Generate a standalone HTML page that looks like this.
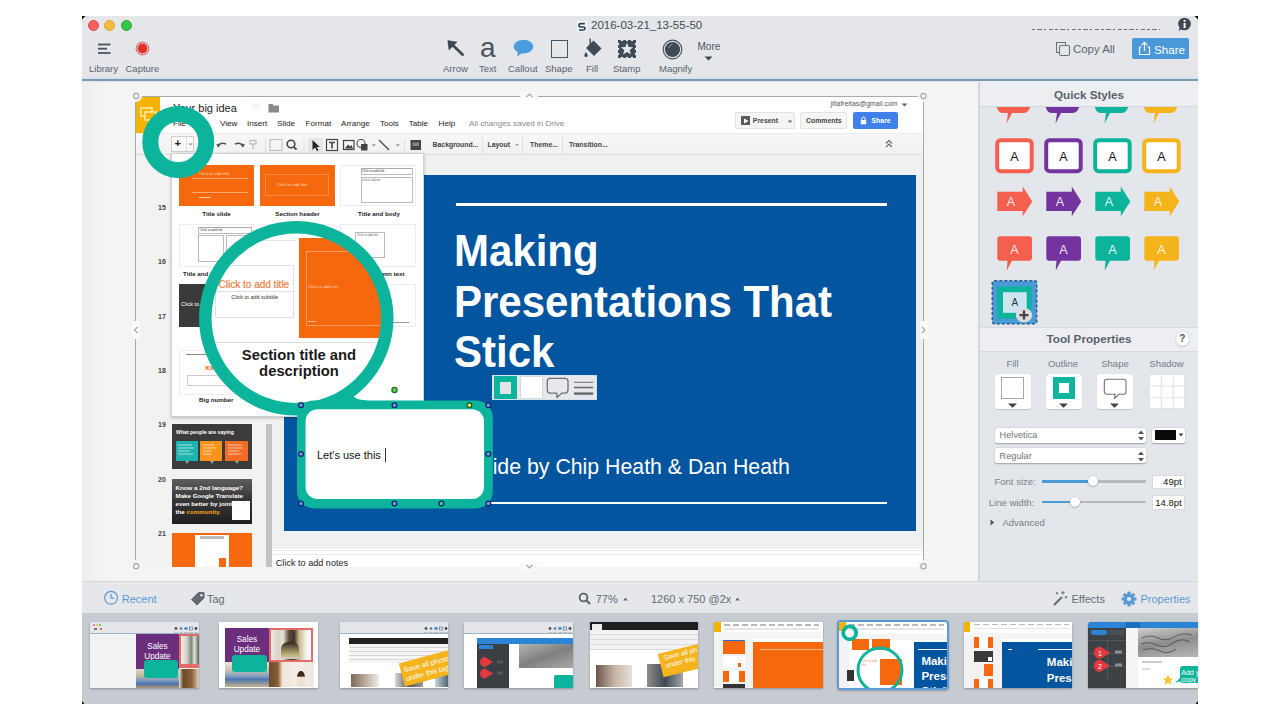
<!DOCTYPE html>
<html><head><meta charset="utf-8">
<style>
*{margin:0;padding:0;box-sizing:border-box}
html,body{width:1280px;height:720px;overflow:hidden;background:#fff;font-family:"Liberation Sans",sans-serif}
.a{position:absolute}
#win{position:absolute;left:82px;top:16px;width:1116px;height:688px;background:#e4e6ea;overflow:hidden}
#tb{left:0;top:0;width:1116px;height:65px;background:#e4e6ea;border-bottom:2px solid #7f98ac;box-shadow:0 -1.5px 0 #d3e3f0 inset, 0 1.5px 0 #dce9f4}
#canvas{left:0;top:66px;width:896px;height:499px;background:linear-gradient(90deg,#eceeed 0px,#f1f3f2 14px,#f3f5f4 30px)}
#rp{left:896px;top:66px;width:220px;height:499px;background:#e3e6ea;border-left:2px solid #d3d6da}
#bb{left:0;top:565px;width:1116px;height:32px;background:#e5e7eb;border-top:1px solid #d3d6da}
.lbl{font-size:9.5px;color:#5b636d;white-space:nowrap;line-height:12px}
.mn{top:120.4px;font-size:8.1px;line-height:8.1px;color:#222;white-space:nowrap}
.gb{font-size:6.9px;line-height:7px;font-weight:700;color:#444;white-space:nowrap}
.num{left:158px;font-size:7px;line-height:8px;color:#444;font-weight:700}
.tiny{font-size:4.3px;line-height:5px;white-space:nowrap}
.lb{font-size:6.2px;line-height:7px;font-weight:700;color:#222;white-space:nowrap}
.tp{top:359.4px;text-align:center;font-size:9.5px;line-height:10px;color:#767d85;white-space:nowrap}
.sw{top:374.2px;width:36.1px;height:35.3px;background:#fff;border-radius:3px;box-shadow:0 0.5px 1px rgba(0,0,0,0.15)}
.th{overflow:hidden;box-shadow:0 1px 2px rgba(0,0,0,0.3)}
.ttl{font-size:42px;line-height:42px;font-weight:700;color:#fff;white-space:nowrap;transform:scaleY(1.07);transform-origin:0 35.5px}
#fs{left:0;top:597px;width:1116px;height:91px;background:#c6cbd2}
</style></head><body>
<div id="win">
  <div id="tb" class="a"></div>
  <div id="canvas" class="a"></div>
  <div id="rp" class="a"></div>
  <div id="bb" class="a"></div>
  <div id="fs" class="a"></div>
</div>
<!-- SCREENSHOT -->
<div class="a" style="left:135px;top:95.5px;width:789px;height:471.5px;border:1px solid #a7aaad;background:#fff"></div>
<div class="a" style="left:136px;top:96.5px;width:787px;height:470px;overflow:hidden">
<div class="a" style="left:-136px;top:-96.5px;width:1280px;height:720px;font-family:'Liberation Sans',sans-serif">
  <!-- header -->
  <div class="a" style="left:136px;top:97px;width:787px;height:36px;background:#fff"></div>
  <div class="a" style="left:136px;top:97px;width:24px;height:36px;background:#f4b400"></div>
  <svg class="a" style="left:139px;top:106px" width="19" height="17"><rect x="2" y="2" width="11" height="8" fill="none" stroke="#fde9a8" stroke-width="1.6"/><rect x="6" y="6" width="11" height="8" fill="#f4b400" stroke="#fde9a8" stroke-width="1.6"/></svg>
  <div class="a" style="left:173px;top:103.4px;font-size:11px;line-height:11px;color:#222;white-space:nowrap">Your big idea</div>
  <div class="a" style="left:251px;top:101px;font-size:11px;line-height:11px;color:#ddd">&#9734;</div>
  <svg class="a" style="left:268px;top:103px" width="12" height="10"><path d="M0.5 1 H4.5 L5.5 2.5 H11 V9.5 H0.5 Z" fill="#8a8a8a"/></svg>
  <div class="a mn" style="left:173px">File</div>
  <div class="a mn" style="left:194px">Edit</div>
  <div class="a mn" style="left:220px">View</div>
  <div class="a mn" style="left:247px">Insert</div>
  <div class="a mn" style="left:277px">Slide</div>
  <div class="a mn" style="left:305.5px">Format</div>
  <div class="a mn" style="left:341px">Arrange</div>
  <div class="a mn" style="left:380px">Tools</div>
  <div class="a mn" style="left:408.7px">Table</div>
  <div class="a mn" style="left:438.6px">Help</div>
  <div class="a mn" style="left:469px;color:#8a8a8a">All changes saved in Drive</div>
  <div class="a" style="left:830.5px;top:101.4px;font-size:6.9px;line-height:6.9px;color:#555;white-space:nowrap">jillafreitas@gmail.com</div>
  <svg class="a" style="left:901px;top:103px" width="7" height="4"><path d="M0.5 0.5 H6.5 L3.5 3.5 Z" fill="#666"/></svg>
  <div class="a" style="left:735px;top:112px;width:60px;height:17px;background:#f5f5f5;border:1px solid #e2e2e2;border-radius:2px"></div>
  <div class="a" style="left:740.5px;top:116px;width:9px;height:9px;background:#5b5b5b"></div>
  <svg class="a" style="left:742.5px;top:117.5px" width="6" height="6"><path d="M1 0.5 L5.5 3 L1 5.5 Z" fill="#fff"/></svg>
  <div class="a gb" style="left:752.8px;top:117px">Present</div>
  <svg class="a" style="left:786.5px;top:120px" width="6" height="4"><path d="M0.5 0.5 H5.5 L3 3 Z" fill="#777"/></svg>
  <div class="a" style="left:800px;top:112px;width:47px;height:17px;background:#f5f5f5;border:1px solid #e2e2e2;border-radius:2px"></div>
  <div class="a gb" style="left:806px;top:117px">Comments</div>
  <div class="a" style="left:853px;top:112px;width:45px;height:17px;background:#3f80ea;border-radius:2px"></div>
  <svg class="a" style="left:860px;top:116px" width="7" height="9"><path d="M1.8 4 V2.8 A1.7 1.7 0 0 1 5.2 2.8 V4" fill="none" stroke="#fff" stroke-width="1"/><rect x="0.8" y="4" width="5.4" height="4.3" fill="#fff"/></svg>
  <div class="a gb" style="left:871.5px;top:117px;color:#fff">Share</div>
  <!-- toolbar row -->
  <div class="a" style="left:136px;top:133px;width:787px;height:22px;background:linear-gradient(180deg,#f7f7f7,#f1f1f1);border-top:1px solid #ececec;border-bottom:1px solid #e0e0e0"></div>
  <div class="a" style="left:171.3px;top:136.3px;width:23.2px;height:15.6px;background:#fbfbfb;border:1px solid #cfcfcf"></div>
  <div class="a" style="left:186px;top:137px;width:1px;height:14px;background:#ddd"></div>
  <div class="a" style="left:174.5px;top:136px;font-size:11px;line-height:14px;font-weight:700;color:#222">+</div>
  <svg class="a" style="left:188px;top:143px" width="5" height="3"><path d="M0.5 0.5 H4.5 L2.5 2.5 Z" fill="#888"/></svg>
  <svg class="a" style="left:214px;top:138px" width="212" height="14">
    <g fill="none" stroke="#555" stroke-width="1.5">
      <path d="M4 9 Q6 3.5 12 6"/><path d="M21 6 Q27 3.5 29 9"/>
    </g>
    <path d="M2.2 6.5 L5.8 5.2 L4.6 9.6 Z" fill="#555"/><path d="M31 6.5 L27.4 5.2 L28.6 9.6 Z" fill="#555"/>
    <g stroke="#bbb" stroke-width="1.2" fill="none"><rect x="36" y="2.5" width="6" height="3.5"/><line x1="39" y1="6" x2="39" y2="11.5"/></g>
    <line x1="51.5" y1="1" x2="51.5" y2="14" stroke="#e0e0e0"/>
    <rect x="56" y="1.5" width="12" height="11" fill="none" stroke="#bbb"/>
    <circle cx="77" cy="6" r="3.8" fill="none" stroke="#444" stroke-width="1.6"/><line x1="79.8" y1="8.8" x2="82.5" y2="11.5" stroke="#444" stroke-width="1.8"/>
    <line x1="90" y1="1" x2="90" y2="14" stroke="#e0e0e0"/>
    <rect x="94" y="0" width="15" height="14" fill="#e6e6e6"/>
    <path d="M98.5 2 L98.5 12 L101 9.6 L103 13 L104.5 12.3 L102.6 9 L105.8 9 Z" fill="#222"/>
    <rect x="112.5" y="1.5" width="11" height="11" fill="none" stroke="#444" stroke-width="1.2"/><path d="M115 4.5 H121 M118 4.5 V10.5" stroke="#444" stroke-width="1.6"/>
    <rect x="129.5" y="2.5" width="10.5" height="9" fill="none" stroke="#444" stroke-width="1.2"/><path d="M131 10.5 L134 6.5 L136 8.5 L137.5 7 L139 10.5 Z" fill="#444"/>
    <circle cx="147" cy="5.5" r="4" fill="none" stroke="#444" stroke-width="1.1"/><rect x="147" y="6" width="6.5" height="6.5" fill="#444"/>
    <path d="M157.8 6.3 H161.8 L159.8 8.8 Z" fill="#999"/>
    <line x1="165" y1="2" x2="175" y2="12" stroke="#444" stroke-width="1.3"/>
    <path d="M181.8 6.3 H185.8 L183.8 8.8 Z" fill="#999"/>
    <line x1="190.5" y1="1" x2="190.5" y2="14" stroke="#e0e0e0"/>
    <rect x="196.5" y="2" width="10.5" height="10" fill="#444"/><rect x="198.5" y="4.5" width="6.5" height="3.5" fill="#888"/>
  </svg>
  <div class="a gb" style="left:432.5px;top:141px">Background...</div>
  <div class="a" style="left:481.5px;top:135px;width:1px;height:19px;background:#e0e0e0"></div>
  <div class="a gb" style="left:487.5px;top:141px">Layout</div>
  <svg class="a" style="left:515px;top:144px" width="4" height="3"><path d="M0 0 H4 L2 2 Z" fill="#999"/></svg>
  <div class="a" style="left:522px;top:135px;width:1px;height:19px;background:#e0e0e0"></div>
  <div class="a gb" style="left:530px;top:141px">Theme...</div>
  <div class="a" style="left:562px;top:135px;width:1px;height:19px;background:#e0e0e0"></div>
  <div class="a gb" style="left:569px;top:141px">Transition...</div>
  <svg class="a" style="left:885px;top:139px" width="8" height="9"><path d="M1 4.5 L4 1.5 L7 4.5 M1 8 L4 5 L7 8" fill="none" stroke="#666" stroke-width="1.1"/></svg>
  <!-- left column & workspace -->
  <div class="a" style="left:136px;top:155px;width:136px;height:412px;background:#f2f2f2"></div>
  <div class="a" style="left:272px;top:155px;width:651px;height:394px;background:#eff0f0"></div>
  <div class="a" style="left:266px;top:424px;width:5.5px;height:143px;background:#c3c3c3"></div>
  <div class="a" style="left:284px;top:175px;width:631.5px;height:355.5px;background:#02559e"></div>
  <div class="a" style="left:272px;top:549.5px;width:651px;height:18px;background:#fff;border-top:1px solid #e8e8e8"></div>
  <div class="a" style="left:272px;top:554px;width:651px;height:1px;background:#ececec"></div>
  <div class="a" style="left:275.8px;top:559.4px;font-size:9.1px;line-height:9px;color:#222;white-space:nowrap">Click to add notes</div>
  <!-- slide numbers -->
  <div class="a num" style="top:203.5px">15</div>
  <div class="a num" style="top:258px">16</div>
  <div class="a num" style="top:313px">17</div>
  <div class="a num" style="top:367px">18</div>
  <div class="a num" style="top:421px">19</div>
  <div class="a num" style="top:476px">20</div>
  <div class="a num" style="top:530px">21</div>
  <!-- thumbs 19-21 -->
  <div class="a" style="left:172px;top:424px;width:80px;height:45px;background:#3b3b3b"></div>
  <div class="a" style="left:176px;top:429px;font-size:5.2px;line-height:6px;font-weight:700;color:#fff;white-space:nowrap">What people are saying</div>
  <div class="a" style="left:175.5px;top:441px;width:22px;height:20px;background:#1db4b0"></div>
  <div class="a" style="left:200px;top:441px;width:22px;height:20px;background:#f7941d"></div>
  <div class="a" style="left:225px;top:441px;width:23px;height:20px;background:#f26c25"></div>
  <svg class="a" style="left:175.5px;top:443px" width="73" height="22"><g stroke="#fff" stroke-opacity="0.75" stroke-width="0.8"><path d="M2 2 H16 M2 5 H18 M2 8 H14 M2 11 H17"/><path d="M27 2 H38 M27 5 H40 M27 8 H36 M27 11 H35"/><path d="M52 2 H66 M52 5 H67 M52 8 H63 M52 11 H65"/></g><path d="M9 18 L11 21 L13 18 Z M34 18 L36 21 L38 18 Z M59 18 L61 21 L63 18 Z" fill="#fff" fill-opacity="0.5"/></svg>
  <div class="a" style="left:172px;top:478.5px;width:80px;height:45px;background:linear-gradient(180deg,#5e5e5e 0%,#3a3a3a 40%,#1e1e1e 100%)"></div>
  <div class="a" style="left:175.5px;top:484px;font-size:6.2px;line-height:8px;font-weight:700;color:#fff;white-space:nowrap">Know a 2nd language?<br>Make Google Translate<br>even better by joining<br>the <span style="color:#f7a21b">community.</span></div>
  <div class="a" style="left:231.5px;top:501px;width:18.5px;height:19px;background:#fff"></div>
  <div class="a" style="left:172px;top:533px;width:80px;height:34px;background:#f6680e"></div>
  <div class="a" style="left:195px;top:535px;width:34px;height:32px;background:#fff"></div>
  <div class="a" style="left:200px;top:536px;width:24px;height:3px;background:#bbb"></div>
  <div class="a" style="left:219px;top:558px;width:7px;height:9px;background:#f6680e"></div>
  <!-- slide content -->
  <div class="a" style="left:455.8px;top:202.5px;width:431px;height:3px;background:#fff"></div>
  <div class="a ttl" style="left:454px;top:231px">Making</div>
  <div class="a ttl" style="left:454px;top:282.2px">Presentations That</div>
  <div class="a ttl" style="left:454px;top:332.2px">Stick</div>
  <div class="a" style="left:450px;top:457px;font-size:21.3px;line-height:21.3px;color:#fff;white-space:nowrap">A guide by Chip Heath &amp; Dan Heath</div>
  <div class="a" style="left:455.8px;top:502px;width:431px;height:2px;background:#fff"></div>
  <!-- layout popup -->
  <div class="a" style="left:171px;top:152.5px;width:253px;height:264px;background:#fff;border:1px solid #d0d0d0;box-shadow:0 1px 3px rgba(0,0,0,0.25)"></div>
  <!-- row1 -->
  <div class="a" style="left:179px;top:164.5px;width:74.6px;height:41.5px;background:#f6680e"></div>
  <div class="a tiny" style="left:199px;top:170.5px;color:#ffd9bf">Click to add title</div>
  <div class="a" style="left:192px;top:178px;width:56px;height:0.5px;background:#f9a670"></div>
  <div class="a" style="left:192px;top:192px;width:56px;height:0.5px;background:#f9a670"></div>
  <div class="a" style="left:199px;top:197px;width:12px;height:1px;background:#ffc7a0"></div>
  <div class="a" style="left:260px;top:164.5px;width:75px;height:41.5px;background:#f6680e"></div>
  <div class="a" style="left:265px;top:174px;width:64px;height:22px;border:0.5px solid #f58a4a"></div>
  <div class="a tiny" style="left:277px;top:182px;color:#ffd9bf">Click to add title</div>
  <div class="a" style="left:340px;top:164.5px;width:76px;height:41.5px;background:#fff;border:1px solid #eee"></div>
  <div class="a" style="left:360.5px;top:167.5px;width:52px;height:7px;border:0.6px solid #bbb;border-top:1.3px solid #aaa"></div>
  <div class="a tiny" style="left:362px;top:168.5px;color:#333;font-size:3.2px">Click to add title</div>
  <div class="a" style="left:360.5px;top:177px;width:52px;height:26px;border:0.6px solid #bbb"></div>
  <div class="a tiny" style="left:362px;top:178px;color:#666;font-size:2.6px">Click to add text</div>
  <div class="a lb" style="left:202.3px;top:209.5px">Title slide</div>
  <div class="a lb" style="left:275.3px;top:209.5px">Section header</div>
  <div class="a lb" style="left:358px;top:209.5px">Title and body</div>
  <!-- row2 -->
  <div class="a" style="left:179px;top:224px;width:74.6px;height:43px;background:#fff;border:1px solid #eee"></div>
  <div class="a" style="left:198px;top:227px;width:54px;height:6.5px;border:0.6px solid #bbb;border-top:1.3px solid #aaa"></div>
  <div class="a tiny" style="left:200px;top:228px;color:#333;font-size:3.2px">Click to add title</div>
  <div class="a" style="left:198px;top:235px;width:26px;height:27px;border:0.6px solid #bbb"></div>
  <div class="a" style="left:226px;top:235px;width:26px;height:27px;border:0.6px solid #bbb"></div>
  <div class="a" style="left:260px;top:224px;width:75px;height:43px;background:#fff;border:1px solid #eee"></div>
  <div class="a" style="left:340px;top:224px;width:76px;height:43px;background:#fff;border:1px solid #eee"></div>
  <div class="a" style="left:355px;top:232px;width:30px;height:26px;border:0.6px solid #bbb"></div>
  <div class="a tiny" style="left:357px;top:233px;color:#666;font-size:3px">Click to add title</div>
  <div class="a lb" style="left:183px;top:269.5px">Title and two columns</div>
  <div class="a lb" style="left:356px;top:269.5px">One column text</div>
  <!-- row3 -->
  <div class="a" style="left:179px;top:284px;width:74.6px;height:43px;background:#3a3a3a"></div>
  <div class="a tiny" style="left:181px;top:302px;color:#fff;font-size:5.5px">Click to add title</div>
  <div class="a" style="left:260px;top:284px;width:75px;height:43px;background:#fff;border:1px solid #eee"></div>
  <div class="a" style="left:340px;top:284px;width:76px;height:43px;background:#fff;border:1px solid #eee"></div>
  <div class="a" style="left:347px;top:322px;width:62px;height:0.8px;background:#999"></div>
  <!-- row4 -->
  <div class="a" style="left:179px;top:350px;width:74.6px;height:44.5px;background:#fff;border:1px solid #eee"></div>
  <div class="a" style="left:186px;top:354px;width:62px;height:0.8px;background:#888"></div>
  <div class="a" style="left:205px;top:364px;font-size:8px;line-height:8px;color:#f6680e;font-weight:700">xx%</div>
  <div class="a" style="left:187px;top:375px;width:60px;height:11px;border:0.6px solid #ccc"></div>
  <div class="a" style="left:260px;top:350px;width:75px;height:44.5px;background:#fff;border:1px solid #eee"></div>
  
  <div class="a lb" style="left:199px;top:396px">Big number</div>
</div>
</div>

<!-- ANNOTATIONS -->
<!-- screenshot selection handles -->
<div class="a" style="left:130px;top:90px;width:12px;height:12px;background:#f3f5f4;border-radius:50%"></div>
<div class="a" style="left:917.5px;top:90px;width:12px;height:12px;background:#f3f5f4;border-radius:50%"></div>
<div class="a" style="left:130px;top:560px;width:12px;height:12px;background:#f3f5f4;border-radius:50%"></div>
<div class="a" style="left:917.5px;top:560px;width:12px;height:12px;background:#f3f5f4;border-radius:50%"></div>
<div class="a" style="left:520px;top:92px;width:18px;height:8px;background:#f8f9f8"></div>
<div class="a" style="left:520px;top:563px;width:18px;height:8px;background:#f8f9f8"></div>
<div class="a" style="left:132px;top:321px;width:8px;height:18px;background:#f8f9f8"></div>
<div class="a" style="left:919.5px;top:321px;width:8px;height:18px;background:#f8f9f8"></div>
<svg class="a" style="left:0;top:0" width="1280" height="720">
  <g fill="none" stroke="#a3a6a9" stroke-width="1.1">
    <circle cx="136.2" cy="96" r="2.6"/><circle cx="923.5" cy="96" r="2.6"/><circle cx="136.2" cy="566.2" r="2.6"/><circle cx="923.5" cy="566.2" r="2.6"/>
    <path d="M526.5 97 L529.5 94 L532.5 97"/><path d="M526.5 565 L529.5 568 L532.5 565"/>
    <path d="M137.5 327 L134.5 330 L137.5 333"/><path d="M922 327 L925 330 L922 333"/>
  </g>
</svg>

<!-- magnifier disk -->
<div class="a" style="left:210.3px;top:232.3px;width:172px;height:172px;border-radius:50%;overflow:hidden;background:#fff">
<div class="a" style="left:-210.3px;top:-232.3px;width:1280px;height:720px">
  <div class="a" style="left:204px;top:240px;width:92px;height:1px;background:#e6e6e6"></div>
  <div class="a" style="left:214.5px;top:265px;width:79.5px;height:52.6px;border:1px solid #e0e0e0"></div>
  <div class="a" style="left:214.5px;top:290.5px;width:79.5px;height:1px;background:#e0e0e0"></div>
  <div class="a" style="left:218.6px;top:278.5px;font-size:10px;line-height:11px;color:#ee7b40;white-space:nowrap;-webkit-text-stroke:0.2px #ee7b40">Click to add title</div>
  <div class="a" style="left:231.3px;top:294.2px;font-size:5.4px;line-height:6px;color:#333;white-space:nowrap">Click to add subtitle</div>
  <div class="a" style="left:299.2px;top:238.4px;width:110px;height:100px;background:#f6680e"></div>
  <div class="a" style="left:306.2px;top:251.3px;width:95px;height:74.3px;border:0.8px solid #f89a66"></div>
  <div class="a" style="left:308px;top:283.5px;font-size:4.2px;line-height:5px;color:#ffd2b5;white-space:nowrap">Click to add text</div>
  <div class="a" style="left:308px;top:321px;width:8px;height:1px;background:#f9b58c"></div>
  <div class="a" style="left:200px;top:342px;width:200px;height:1px;background:#e3e3e3"></div>
  <div class="a" style="left:199px;top:347.3px;width:200px;text-align:center;font-size:14.8px;line-height:16px;font-weight:700;color:#1a1a1a">Section title and<br>description</div>
</div>
</div>
<svg class="a" style="left:0;top:0;overflow:visible" width="1280" height="720">
  <circle cx="296.3" cy="318.3" r="91" fill="none" stroke="#0bb49a" stroke-width="12.5"/>
  <circle cx="178.3" cy="142" r="28" fill="none" stroke="#0bb49a" stroke-width="16"/>
  <rect x="297" y="400.4" width="195.8" height="108" rx="17" ry="17" fill="#0bb49a"/><rect x="297" y="402.5" width="15" height="12" fill="#0bb49a"/><path d="M344 402 L367 402 L367 400.4 Q357 400 353.3 396.3 Z" fill="#0bb49a"/><rect x="305.6" y="409.2" width="178.4" height="89.8" rx="12" ry="12" fill="#fff"/>
  <g stroke="#13226a" stroke-width="1.2">
    <circle cx="301" cy="405.3" r="2.4" fill="#6f9be0"/>
    <circle cx="394.5" cy="405.3" r="2.4" fill="#6f9be0"/>
    <circle cx="469.4" cy="405.3" r="2.4" fill="#eef25a" stroke="#1a5a14"/>
    <circle cx="488.3" cy="405.3" r="2.4" fill="#6f9be0"/>
    <circle cx="301" cy="454" r="2.4" fill="#6f9be0"/>
    <circle cx="488.3" cy="454" r="2.4" fill="#6f9be0"/>
    <circle cx="301" cy="503.5" r="2.4" fill="#6f9be0"/>
    <circle cx="394.5" cy="503.5" r="2.4" fill="#6f9be0"/>
    <circle cx="441.4" cy="503.5" r="2.4" fill="#4fc7a6"/>
    <circle cx="488.3" cy="503.5" r="2.4" fill="#6f9be0"/>
    <circle cx="394.5" cy="390" r="2.6" fill="#5dd24f" stroke="#1e6a1e"/>
  </g>
</svg>
<div class="a" style="left:317px;top:449.5px;font-size:11px;line-height:11px;color:#111;white-space:nowrap">Let's use this</div>
<div class="a" style="left:384.5px;top:447.5px;width:1px;height:14px;background:#333"></div>
<!-- mini toolbar -->
<div class="a" style="left:492.4px;top:374.9px;width:104.4px;height:25.6px;background:#e6e8eb;border:1px solid #d2e2f0"></div>
<div class="a" style="left:493.9px;top:375.8px;width:23px;height:23.4px;background:#0bb49a"></div>
<div class="a" style="left:499.5px;top:381.9px;width:11.7px;height:11.7px;background:#e4e4e4"></div>
<div class="a" style="left:520.1px;top:376.2px;width:22.5px;height:23px;background:#fff;border:1px solid #d8d8d8"></div>
<svg class="a" style="left:545px;top:376px" width="26" height="23"><path d="M5 2.3 H20 Q23 2.3 23 5.3 V14.1 Q23 17.1 20 17.1 H17 L12 21.5 L11.8 17.1 H5 Q2.3 17.1 2.3 14.1 V5.3 Q2.3 2.3 5 2.3 Z" fill="none" stroke="#6f7275" stroke-width="1.3" stroke-linejoin="round"/></svg>
<svg class="a" style="left:572px;top:376px" width="24" height="23"><g stroke="#68696b"><line x1="2" y1="6.3" x2="21.2" y2="6.3" stroke-width="1"/><line x1="2" y1="11.5" x2="21.2" y2="11.5" stroke-width="1.6"/><line x1="2" y1="17.6" x2="21.2" y2="17.6" stroke-width="2.4"/></g></svg>

<!-- RIGHT PANEL -->
<div class="a" style="left:980px;top:81px;width:218px;height:25.5px;background:#eceef1;border-bottom:1px solid #d6d9dd"></div>
<div class="a" style="left:980px;top:87.5px;width:218px;text-align:center;font-size:11.7px;line-height:13px;font-weight:700;color:#59626d">Quick Styles</div>
<div class="a" style="left:980px;top:106.5px;width:218px;height:220px;overflow:hidden">
<svg class="a" style="left:-980px;top:-106.5px" width="1280" height="720">
  <!-- row0 bubbles tails -->
  <g>
    <path d="M996 100 H1031 Q1031 113 1023 113 H1012 L1006.5 123.5 L1008 113 H1003 Q996 113 996 100Z" fill="#f4604d"/>
    <path d="M1045 100 H1080 Q1080 113 1072 113 H1061 L1055.5 123.5 L1057 113 H1052 Q1045 113 1045 100Z" fill="#7434a0"/>
    <path d="M1094 100 H1129 Q1129 113 1121 113 H1110 L1104.5 123.5 L1106 113 H1101 Q1094 113 1094 100Z" fill="#0bb49a"/>
    <path d="M1143 100 H1178 Q1178 113 1170 113 H1159 L1153.5 123.5 L1155 113 H1150 Q1143 113 1143 100Z" fill="#f5b31c"/>
  </g>
  <!-- row1 boxes -->
  <g stroke-width="4" fill="#fff">
    <rect x="997.2" y="140.2" width="34.5" height="31" rx="3.5" stroke="#f4604d"/>
    <rect x="1046.2" y="140.2" width="34.5" height="31" rx="3.5" stroke="#7434a0"/>
    <rect x="1095.2" y="140.2" width="34.5" height="31" rx="3.5" stroke="#0bb49a"/>
    <rect x="1144.2" y="140.2" width="34.5" height="31" rx="3.5" stroke="#f5b31c"/>
  </g>
  <g font-family="Liberation Sans" font-size="12.5" fill="#111" text-anchor="middle">
    <text x="1014.5" y="160.5">A</text><text x="1063.5" y="160.5">A</text><text x="1112.5" y="160.5">A</text><text x="1161.5" y="160.5">A</text>
  </g>
  <!-- row2 arrows -->
  <g>
    <path d="M997.3 191.7 H1022.8 V186.5 L1032.3 201.4 L1022.8 216.3 V211 H997.3 Z" fill="#f4604d"/>
    <path d="M1046.3 191.7 H1071.8 V186.5 L1081.3 201.4 L1071.8 216.3 V211 H1046.3 Z" fill="#7434a0"/>
    <path d="M1095.3 191.7 H1120.8 V186.5 L1130.3 201.4 L1120.8 216.3 V211 H1095.3 Z" fill="#0bb49a"/>
    <path d="M1144.3 191.7 H1169.8 V186.5 L1179.3 201.4 L1169.8 216.3 V211 H1144.3 Z" fill="#f5b31c"/>
  </g>
  <g font-family="Liberation Sans" font-size="12.5" fill="#fff" fill-opacity="0.9" text-anchor="middle">
    <text x="1011" y="206">A</text><text x="1060" y="206">A</text><text x="1109" y="206">A</text><text x="1158" y="206">A</text>
  </g>
  <!-- row3 bubbles -->
  <g>
    <path d="M1000 236.2 H1029 Q1032 236.2 1032 239.2 V257.7 Q1032 260.7 1029 260.7 H1012 L1006.7 270.5 L1007.5 260.7 H1000 Q997.3 260.7 997.3 257.7 V239.2 Q997.3 236.2 1000 236.2Z" fill="#f4604d"/>
    <path d="M1049 236.2 H1078 Q1081 236.2 1081 239.2 V257.7 Q1081 260.7 1078 260.7 H1061 L1055.7 270.5 L1056.5 260.7 H1049 Q1046.3 260.7 1046.3 257.7 V239.2 Q1046.3 236.2 1049 236.2Z" fill="#7434a0"/>
    <path d="M1098 236.2 H1127 Q1130 236.2 1130 239.2 V257.7 Q1130 260.7 1127 260.7 H1110 L1104.7 270.5 L1105.5 260.7 H1098 Q1095.3 260.7 1095.3 257.7 V239.2 Q1095.3 236.2 1098 236.2Z" fill="#0bb49a"/>
    <path d="M1147 236.2 H1176 Q1179 236.2 1179 239.2 V257.7 Q1179 260.7 1176 260.7 H1159 L1153.7 270.5 L1154.5 260.7 H1147 Q1144.3 260.7 1144.3 257.7 V239.2 Q1144.3 236.2 1147 236.2Z" fill="#f5b31c"/>
  </g>
  <g font-family="Liberation Sans" font-size="12.5" fill="#fff" fill-opacity="0.9" text-anchor="middle">
    <text x="1014.3" y="253.5">A</text><text x="1063.3" y="253.5">A</text><text x="1112.3" y="253.5">A</text><text x="1161.3" y="253.5">A</text>
  </g>
  <!-- row4 custom -->
  <rect x="992.3" y="280.8" width="44.4" height="43" rx="2" fill="#4a9ad8" stroke="#2d5c86" stroke-width="1.5" stroke-dasharray="3 2"/>
  <rect x="997.2" y="286.5" width="34.4" height="32.1" fill="#0bb49a"/>
  <rect x="1003" y="292.2" width="23.7" height="20.6" fill="#cfe4f3"/>
  <text x="1014.8" y="306" font-family="Liberation Sans" font-size="10" fill="#2d3640" text-anchor="middle">A</text>
  <ellipse cx="1024" cy="315.2" rx="8.2" ry="7.2" fill="#dcdbe0"/>
  <path d="M1024 310.6 V319.6 M1019.5 315.1 H1028.5" stroke="#4a4045" stroke-width="2.4"/>
</svg>
</div>
<!-- Tool properties -->
<div class="a" style="left:980px;top:327px;width:218px;height:25px;background:#eceef1;border-top:1px solid #d6d9dd;border-bottom:1px solid #d6d9dd"></div>
<div class="a" style="left:980px;top:332px;width:218px;text-align:center;font-size:11.7px;line-height:13px;font-weight:700;color:#59626d">Tool Properties</div>
<div class="a" style="left:1175.5px;top:332px;width:13.5px;height:13.5px;border-radius:50%;background:#fff;box-shadow:0 0.5px 1.5px rgba(0,0,0,0.3);text-align:center;font-size:10px;line-height:13.5px;font-weight:700;color:#4f565e">?</div>
<div class="a tp" style="left:994px;width:37px">Fill</div>
<div class="a tp" style="left:1043px;width:40px">Outline</div>
<div class="a tp" style="left:1095px;width:40px">Shape</div>
<div class="a tp" style="left:1146px;width:41px">Shadow</div>
<div class="a sw" style="left:994.5px"></div>
<div class="a" style="left:1000.7px;top:376.7px;width:23.5px;height:22.7px;background:#fff;border:1px solid #a5aaaf"></div>
<div class="a sw" style="left:1045.8px"></div>
<div class="a" style="left:1053px;top:377px;width:22.4px;height:22.4px;background:#0bb49a"></div>
<div class="a" style="left:1059.3px;top:383.3px;width:9.8px;height:9.8px;background:#fff"></div>
<div class="a sw" style="left:1097px"></div>
<svg class="a" style="left:1100px;top:376px" width="30" height="26"><path d="M7 3.2 H23.5 Q26 3.2 26 5.7 V15.8 Q26 18.3 23.5 18.3 H19 L14.5 22.4 L15 18.3 H7 Q4.3 18.3 4.3 15.8 V5.7 Q4.3 3.2 7 3.2Z" fill="#fff" stroke="#6d737a" stroke-width="1.1"/></svg>
<svg class="a" style="left:1008px;top:403px" width="120" height="6"><path d="M0 0.5 H9 L4.5 4.8Z M51 0.5 H60 L55.5 4.8Z M102 0.5 H111 L106.5 4.8Z" fill="#3d434a"/></svg>
<div class="a" style="left:1148.7px;top:374.2px;width:36.1px;height:35.3px;background:#fff;border:1px solid #e2e4e7"></div>
<svg class="a" style="left:1148.7px;top:374.2px" width="37" height="36"><g stroke="#dfe2e6" stroke-width="1"><line x1="12.3" y1="0" x2="12.3" y2="36"/><line x1="24.3" y1="0" x2="24.3" y2="36"/><line x1="0" y1="12" x2="37" y2="12"/><line x1="0" y1="23.8" x2="37" y2="23.8"/></g></svg>
<div class="a" style="left:995.3px;top:427.6px;width:150.5px;height:15.1px;background:#fff;border-radius:2px;box-shadow:0 0.5px 1.5px rgba(0,0,0,0.3)"></div>
<div class="a" style="left:999.6px;top:430px;font-size:9.2px;line-height:10px;color:#6d747c">Helvetica</div>
<svg class="a" style="left:1137px;top:429px" width="8" height="13"><path d="M1 5 L4 1.5 L7 5Z M1 8 L4 11.5 L7 8Z" fill="#555"/></svg>
<div class="a" style="left:995.3px;top:448.2px;width:150.5px;height:15.1px;background:#fff;border-radius:2px;box-shadow:0 0.5px 1.5px rgba(0,0,0,0.3)"></div>
<div class="a" style="left:999.6px;top:450.6px;font-size:9.2px;line-height:10px;color:#6d747c">Regular</div>
<svg class="a" style="left:1137px;top:449.6px" width="8" height="13"><path d="M1 5 L4 1.5 L7 5Z M1 8 L4 11.5 L7 8Z" fill="#555"/></svg>
<div class="a" style="left:1152.3px;top:427.6px;width:32.5px;height:15.1px;background:#fff;border-radius:2px;box-shadow:0 0.5px 1.5px rgba(0,0,0,0.3)"></div>
<div class="a" style="left:1154.8px;top:430px;width:21px;height:10px;background:#0a0a0a"></div>
<svg class="a" style="left:1177.5px;top:432.5px" width="6" height="4"><path d="M0.5 0.5 H5.5 L3 3.5Z" fill="#444"/></svg>
<div class="a" style="left:994.5px;top:476.5px;font-size:9.5px;line-height:10px;color:#7b8188">Font size:</div>
<div class="a" style="left:988.8px;top:497.5px;font-size:9.5px;line-height:10px;color:#7b8188">Line width:</div>
<div class="a" style="left:1042.2px;top:480.2px;width:103.6px;height:2.4px;background:#b5b9be;border-radius:1px"></div>
<div class="a" style="left:1042.2px;top:480.2px;width:50.5px;height:2.4px;background:#4a9ad8;border-radius:1px"></div>
<div class="a" style="left:1087.5px;top:475.8px;width:10.5px;height:10.5px;border-radius:50%;background:#fff;box-shadow:0 0.5px 1.5px rgba(0,0,0,0.45)"></div>
<div class="a" style="left:1042.2px;top:501.1px;width:103.6px;height:2.4px;background:#b5b9be;border-radius:1px"></div>
<div class="a" style="left:1042.2px;top:501.1px;width:32.5px;height:2.4px;background:#4a9ad8;border-radius:1px"></div>
<div class="a" style="left:1069.5px;top:496.8px;width:10.5px;height:10.5px;border-radius:50%;background:#fff;box-shadow:0 0.5px 1.5px rgba(0,0,0,0.45)"></div>
<div class="a" style="left:1151.6px;top:474.5px;width:33.2px;height:14.5px;background:#fff;border:1px solid #d6d9dd"></div>
<div class="a" style="left:1151.6px;top:477px;width:30px;text-align:right;font-size:9.5px;line-height:10px;color:#111">49pt</div>
<div class="a" style="left:1151.6px;top:495px;width:33.2px;height:14.5px;background:#fff;border:1px solid #d6d9dd"></div>
<div class="a" style="left:1151.6px;top:497.5px;width:30px;text-align:right;font-size:9.5px;line-height:10px;color:#111">14.8pt</div>
<svg class="a" style="left:989.5px;top:518.5px" width="5" height="7"><path d="M0.5 0.5 L4.3 3.5 L0.5 6.5Z" fill="#555"/></svg>
<div class="a" style="left:1002.5px;top:517.5px;font-size:9.5px;line-height:10px;color:#767d85">Advanced</div>

<!-- BOTTOM BAR -->
<svg class="a" style="left:103px;top:590px" width="17" height="17"><circle cx="8.1" cy="7.8" r="6.4" fill="none" stroke="#5b9bd5" stroke-width="1.2"/><path d="M8.1 3.8 V8.2 H11.2" fill="none" stroke="#5b9bd5" stroke-width="1.2"/></svg>
<div class="a" style="left:121.8px;top:592.7px;font-size:11px;line-height:13px;color:#5b9bd5;white-space:nowrap">Recent</div>
<svg class="a" style="left:190px;top:591px" width="16" height="15"><path d="M1.5 8.5 L8.5 1.5 H14 V7 L7 14 Z" fill="#636b75" stroke="#636b75" stroke-width="1" stroke-linejoin="round"/><circle cx="11.3" cy="4.2" r="1.2" fill="#e5e7eb"/></svg>
<div class="a" style="left:207px;top:592.7px;font-size:11px;line-height:13px;color:#636b75;white-space:nowrap">Tag</div>
<svg class="a" style="left:578px;top:592px" width="14" height="14"><circle cx="5.5" cy="5.5" r="3.9" fill="none" stroke="#5a636d" stroke-width="1.8"/><line x1="8.3" y1="8.3" x2="12" y2="12" stroke="#5a636d" stroke-width="2.2"/></svg>
<div class="a" style="left:595.7px;top:592.7px;font-size:11px;line-height:13px;color:#636b75;white-space:nowrap">77%</div>
<svg class="a" style="left:622.5px;top:597px" width="5" height="4"><path d="M0.3 3.5 L2.5 0.5 L4.7 3.5Z" fill="#636b75"/></svg>
<div class="a" style="left:651px;top:592.7px;font-size:11px;line-height:13px;color:#636b75;white-space:nowrap">1260 x 750 @2x</div>
<svg class="a" style="left:734.5px;top:597px" width="5" height="4"><path d="M0.3 3.5 L2.5 0.5 L4.7 3.5Z" fill="#636b75"/></svg>
<svg class="a" style="left:1052px;top:590px" width="16" height="17"><line x1="2" y1="15" x2="10" y2="7" stroke="#636b75" stroke-width="2"/><g stroke="#636b75" stroke-width="1"><path d="M11 1 V4.5 M9.3 2.8 H12.7"/><path d="M14 6 V8.4 M12.8 7.2 H15.2"/><path d="M5 2 V4.4 M3.8 3.2 H6.2"/></g></svg>
<div class="a" style="left:1071.5px;top:592.7px;font-size:11px;line-height:13px;color:#636b75;white-space:nowrap">Effects</div>
<svg class="a" style="left:1121px;top:590.5px" width="16" height="16"><g transform="translate(8 8)" fill="#5b9bd5"><circle r="5.3"/><g><rect x="-1.6" y="-7.4" width="3.2" height="14.8"/><rect x="-1.6" y="-7.4" width="3.2" height="14.8" transform="rotate(45)"/><rect x="-1.6" y="-7.4" width="3.2" height="14.8" transform="rotate(90)"/><rect x="-1.6" y="-7.4" width="3.2" height="14.8" transform="rotate(135)"/></g><circle r="2.1" fill="#e5e7eb"/></g></svg>
<div class="a" style="left:1140.4px;top:592.7px;font-size:11px;line-height:13px;color:#5b9bd5;white-space:nowrap">Properties</div>

<!-- FILMSTRIP -->
<!-- thumb 1 -->
<div class="a th" style="left:90px;top:622.4px;width:109.3px;height:65.3px;background:#f3f3f3">
  <div class="a" style="left:0;top:0;width:110px;height:12px;background:#e4e6ea;border-bottom:0.6px solid #9fb3c4"></div>
  <div class="a" style="left:3px;top:2px;width:2px;height:2px;border-radius:50%;background:#f66"></div>
  <div class="a" style="left:6px;top:2px;width:2px;height:2px;border-radius:50%;background:#fb4"></div>
  <div class="a" style="left:9px;top:2px;width:2px;height:2px;border-radius:50%;background:#4c4"></div>
  <div class="a" style="left:3.5px;top:5.5px;width:3px;height:2px;background:#777"></div><div class="a" style="left:10px;top:5.5px;width:2.2px;height:2.2px;border-radius:50%;background:#d33"></div>
  <svg class="a" style="left:84px;top:3px" width="26" height="9"><circle cx="2" cy="3.5" r="1.4" fill="#4d5761"/><circle cx="7" cy="3.5" r="1.3" fill="#6a727c"/><ellipse cx="12" cy="3.5" rx="1.8" ry="1.4" fill="#3f8fd6"/><rect x="15.6" y="2" width="3" height="3" fill="none" stroke="#6a727c" stroke-width="0.7"/><circle cx="22" cy="3.5" r="1.4" fill="#3d4852"/><path d="M0.5 7.5 H3.5 M5.5 7.5 H8.5 M10 7.5 H14 M15 7.5 H19 M20.5 7.5 H23.5" stroke="#9aa0a6" stroke-width="0.6"/></svg>
  <div class="a" style="left:46.2px;top:12px;width:42.5px;height:34.2px;background:#6a2e7c"></div>
  <div class="a" style="left:46.2px;top:20px;width:42.5px;text-align:center;font-size:8.2px;line-height:10px;color:#fff">Sales<br>Update</div>
  <div class="a" style="left:88.7px;top:12px;width:21px;height:34px;background:#e56a6a"></div>
  <div class="a" style="left:90.5px;top:14px;width:19px;height:28px;background:linear-gradient(90deg,#f0ede8 0%,#d8d2c8 30%,#7a8a80 55%,#e8e4dc 70%,#3a4a40 100%)"></div>
  <div class="a" style="left:46.2px;top:46.2px;width:42.5px;height:19px;background:linear-gradient(180deg,#d8d4c8 0%,#c2b89a 35%,#7f9cc0 60%,#4a72aa 80%,#b89a70 100%)"></div><div class="a" style="left:88.7px;top:46.2px;width:21px;height:19px;background:linear-gradient(90deg,#e9e2d8 0%,#6a4a2a 20%,#8a6038 60%,#e8ddd0 100%)"></div>
  <div class="a" style="left:53.6px;top:38px;width:34.8px;height:17.6px;border-radius:3px;background:#0bb49a"></div>
</div>
<!-- thumb 2 -->
<div class="a th" style="left:219.4px;top:622.4px;width:99px;height:65.3px;background:#fff">
  <div class="a" style="left:5.8px;top:5.6px;width:43.4px;height:34.2px;background:#6a2e7c"></div>
  <div class="a" style="left:5.8px;top:13px;width:43.4px;text-align:center;font-size:8.2px;line-height:10px;color:#fff">Sales<br>Update</div>
  <div class="a" style="left:49.2px;top:5.6px;width:44.9px;height:34.2px;background:#e56a6a"></div>
  <div class="a" style="left:51.5px;top:7.8px;width:40.2px;height:29.8px;background:linear-gradient(90deg,#eeeae2 0%,#d9d3c8 18%,#e6e2d8 30%,#5a4a3a 45%,#3f342a 58%,#c9b88a 70%,#f4f2ee 88%,#fff 100%)"></div>
  <div class="a" style="left:62px;top:20px;width:18px;height:17px;border-radius:40% 40% 0 0;background:linear-gradient(180deg,#2e2a26,#b9a86e 70%,#d8d2c0)"></div>
  <div class="a" style="left:5.8px;top:39.8px;width:43.4px;height:24.5px;background:linear-gradient(180deg,#e8e6e0 0%,#cfc5b0 30%,#8aa0c0 55%,#4f78b0 70%,#c9b28a 100%)"></div>
  <div class="a" style="left:49.2px;top:39.8px;width:45px;height:24.5px;background:linear-gradient(90deg,#6a4a2a 0%,#8a6038 20%,#efe6da 30%,#f3ede6 60%,#f0e8e0 100%)"></div>
  <div class="a" style="left:78px;top:49px;width:8px;height:15px;border-radius:45% 45% 10% 10%;background:linear-gradient(180deg,#3a2a22 0%,#3a2a22 35%,#f0e0d0 40%)"></div>
  <div class="a" style="left:13.1px;top:32.2px;width:35px;height:17.6px;border-radius:3px;background:#0bb49a"></div>
</div>
<!-- thumb 3 -->
<div class="a th" style="left:340px;top:622.4px;width:108px;height:65.3px;background:#fff">
  <div class="a" style="left:0;top:0;width:108px;height:12px;background:#e4e6ea;border-bottom:0.6px solid #9fb3c4"></div>
  <svg class="a" style="left:84px;top:3px" width="26" height="9"><circle cx="2" cy="3.5" r="1.4" fill="#4d5761"/><circle cx="7" cy="3.5" r="1.3" fill="#6a727c"/><ellipse cx="12" cy="3.5" rx="1.8" ry="1.4" fill="#3f8fd6"/><rect x="15.6" y="2" width="3" height="3" fill="none" stroke="#6a727c" stroke-width="0.7"/><circle cx="22" cy="3.5" r="1.4" fill="#3d4852"/><path d="M0.5 7.5 H3.5 M5.5 7.5 H8.5 M10 7.5 H14 M15 7.5 H19 M20.5 7.5 H23.5" stroke="#9aa0a6" stroke-width="0.6"/></svg>
  <div class="a" style="left:9px;top:16px;width:99px;height:6px;background:#222"></div>
  <div class="a" style="left:9px;top:22px;width:99px;height:19px;background:repeating-linear-gradient(180deg,#f4f4f4 0 3px,#d6d6d6 3px 4px)"></div>
  <div class="a" style="left:11px;top:52px;width:28px;height:13px;background:linear-gradient(90deg,#7b6a5b,#c9b6a6 60%,#eee)"></div>
  <div class="a" style="left:55px;top:51px;width:28px;height:14px;background:linear-gradient(90deg,#d9d9d9,#50555a 50%,#999)"></div>
  <div class="a" style="left:95px;top:50px;width:13px;height:15px;background:linear-gradient(90deg,#c5d4dd,#55656f)"></div>
  <div class="a" style="left:61px;top:34px;width:54px;height:24px;background:#f5b31c;transform:rotate(-15deg)"></div>
  <div class="a" style="left:64px;top:37px;font-size:7.3px;line-height:9px;color:#fff;transform:rotate(-15deg);white-space:nowrap">Save all photos<br>under this tag</div>
</div>
<!-- thumb 4 -->
<div class="a th" style="left:464.4px;top:622.4px;width:108.8px;height:65.3px;background:#fff">
  <div class="a" style="left:0;top:0;width:109px;height:12px;background:#e4e6ea;border-bottom:0.6px solid #9fb3c4"></div>
  <svg class="a" style="left:84px;top:3px" width="26" height="9"><circle cx="2" cy="3.5" r="1.4" fill="#4d5761"/><circle cx="7" cy="3.5" r="1.3" fill="#6a727c"/><ellipse cx="12" cy="3.5" rx="1.8" ry="1.4" fill="#3f8fd6"/><rect x="15.6" y="2" width="3" height="3" fill="none" stroke="#6a727c" stroke-width="0.7"/><circle cx="22" cy="3.5" r="1.4" fill="#3d4852"/><path d="M0.5 7.5 H3.5 M5.5 7.5 H8.5 M10 7.5 H14 M15 7.5 H19 M20.5 7.5 H23.5" stroke="#9aa0a6" stroke-width="0.6"/></svg>
  <div class="a" style="left:12.8px;top:16px;width:96px;height:5.5px;background:#2b84d6"></div>
  <div class="a" style="left:12.8px;top:21.5px;width:31.6px;height:43.8px;background:#3a3f44"></div>
  <div class="a" style="left:15px;top:23px;width:14px;height:4px;background:#2b84d6"></div>
  <svg class="a" style="left:13px;top:34px" width="30" height="24"><path d="M8 1 A5 5 0 1 0 8 11 L16 6 Z M8 12.5 A5 5 0 1 0 8 22.5 L16 17.5 Z" fill="#e0393e"/><g stroke="#555" stroke-width="3"><line x1="20" y1="6" x2="26" y2="6"/><line x1="20" y1="17" x2="26" y2="17"/></g></svg>
  <div class="a" style="left:54.2px;top:21.5px;width:55px;height:24px;background:linear-gradient(160deg,#b5b5b5,#7f7f7f 50%,#a9a9a9)"></div>
  <div class="a" style="left:89.4px;top:53px;width:19.4px;height:12.3px;background:#0bb49a;border-radius:2px 0 0 0"></div>
</div>
<!-- thumb 5 -->
<div class="a th" style="left:589.5px;top:622.4px;width:108.5px;height:65.3px;background:#fff">
  <div class="a" style="left:0;top:0;width:109px;height:7.2px;background:#1f1f1f"></div>
  <div class="a" style="left:2px;top:1.5px;width:10px;height:5.7px;background:#eee"></div>
  <div class="a" style="left:0;top:7.2px;width:109px;height:20px;background:repeating-linear-gradient(180deg,#f2f2f2 0 4px,#d9d9d9 4px 5px)"></div>
  <div class="a" style="left:6px;top:43px;width:36px;height:22px;background:linear-gradient(90deg,#6a5548,#c6b2a3 50%,#e8dfdb)"></div>
  <div class="a" style="left:57px;top:42px;width:36px;height:23px;background:linear-gradient(90deg,#8c8c8c,#3f4a54 50%,#a0a7ad)"></div>
  <div class="a" style="left:70px;top:26px;width:46px;height:24px;background:#f5b31c;transform:rotate(-14deg)"></div>
  <div class="a" style="left:74px;top:28px;font-size:7px;line-height:8px;color:#fff;transform:rotate(-14deg);white-space:nowrap">Save all ph<br>under this</div>
</div>
<!-- thumb 6 -->
<div class="a th" style="left:713.8px;top:622.4px;width:109.2px;height:65.3px;background:#fff">
  <div class="a" style="left:0;top:0;width:6.8px;height:10px;background:#f4b400"></div>
  <div class="a" style="left:0;top:10px;width:109px;height:7px;background:#f5f5f5"></div>
  <div class="a" style="left:10px;top:2px;width:95px;height:1.5px;background:repeating-linear-gradient(90deg,#777 0 6px,transparent 6px 9px);opacity:0.5;box-shadow:0 4px 0 #ccc"></div>
  <div class="a" style="left:0;top:17px;width:39px;height:48px;background:#f2f2f2"></div>
  <div class="a" style="left:9.5px;top:18px;width:22px;height:1.5px;background:#2b6fd0"></div>
  <div class="a" style="left:9.5px;top:19px;width:21.5px;height:12.6px;background:#f6680e"></div>
  <div class="a" style="left:9.5px;top:34px;width:21.5px;height:12px;background:#fff"></div>
  <div class="a" style="left:24px;top:41px;width:3px;height:4px;background:#f6680e"></div>
  <div class="a" style="left:9.5px;top:48.3px;width:21.5px;height:11.7px;background:#f6680e"></div>
  <div class="a" style="left:15px;top:48.3px;width:10px;height:11.7px;background:#fff"></div>
  <div class="a" style="left:9.5px;top:62px;width:21.5px;height:4px;background:#333"></div>
  <div class="a" style="left:39.6px;top:19.9px;width:70px;height:45.4px;background:#f6680e"></div>
  <div class="a" style="left:46px;top:27px;width:63px;height:1px;background:#f9b48a"></div>
</div>
<!-- thumb 7 selected -->
<div class="a" style="left:837.4px;top:620.2px;width:112px;height:69.9px;border:2.4px solid #5b9bd5;border-radius:4px;background:#fff;box-shadow:0 1px 2px rgba(0,0,0,0.25);overflow:hidden">
  <div class="a" style="left:0;top:0;width:7px;height:9px;background:#f4b400"></div>
  <div class="a" style="left:10px;top:2px;width:95px;height:1.5px;background:repeating-linear-gradient(90deg,#777 0 6px,transparent 6px 9px);opacity:0.5;box-shadow:0 4px 0 #ccc"></div>
  <div class="a" style="left:0;top:12px;width:108px;height:6px;background:#f5f5f5"></div>
  <div class="a" style="left:0;top:18px;width:10px;height:50px;background:#f2f2f2"></div>
  <div class="a" style="left:12.5px;top:17px;width:17.5px;height:11px;background:#f6680e"></div>
  <div class="a" style="left:33px;top:17px;width:18px;height:11px;background:#f6680e"></div>
  <div class="a" style="left:7.7px;top:48px;width:7px;height:11px;background:#333"></div>
  <div class="a" style="left:41px;top:36.5px;width:21.5px;height:26px;background:#f6680e"></div>
  <div class="a" style="left:74.5px;top:20px;width:33.5px;height:50px;background:#02559e"></div>
  <div class="a" style="left:79px;top:27px;width:30px;height:1px;background:#fff"></div>
  <div class="a" style="left:82px;top:32px;font-size:11.5px;line-height:15px;font-weight:700;color:#fff;white-space:nowrap">Making<br>Presen<br>Stick</div>
  <svg class="a" style="left:0;top:0" width="110" height="70"><circle cx="10.7" cy="10.9" r="6.5" fill="none" stroke="#0bb49a" stroke-width="3.8"/><circle cx="41" cy="48" r="22" fill="none" stroke="#0bb49a" stroke-width="3"/></svg>
  <div class="a" style="left:22px;top:37px;width:16px;height:8px;font-size:3px;color:#f08c5a">Click to add title</div>
</div>
<!-- thumb 8 -->
<div class="a th" style="left:963.8px;top:621.8px;width:108.4px;height:66px;background:#fff">
  <div class="a" style="left:0;top:0;width:6px;height:10px;background:#f4b400"></div>
  <div class="a" style="left:10px;top:2px;width:95px;height:1.5px;background:repeating-linear-gradient(90deg,#777 0 6px,transparent 6px 9px);opacity:0.5;box-shadow:0 4px 0 #ccc"></div>
  <div class="a" style="left:0;top:11px;width:108px;height:6px;background:#f5f5f5"></div>
  <div class="a" style="left:0;top:17px;width:38px;height:49px;background:#f2f2f2"></div>
  <div class="a" style="left:9.8px;top:15.6px;width:19.4px;height:10.6px;background:#f6680e"></div>
  <div class="a" style="left:15px;top:15.6px;width:9px;height:10.6px;background:#fff"></div>
  <div class="a" style="left:9.8px;top:28.9px;width:19.4px;height:11.3px;background:#3a3a3a"></div>
  <div class="a" style="left:24px;top:35px;width:4px;height:4px;background:#fff"></div>
  <div class="a" style="left:20px;top:42px;width:9.2px;height:12px;background:#f6680e"></div>
  <div class="a" style="left:9.8px;top:57px;width:19.4px;height:9px;background:#f6680e"></div>
  <div class="a" style="left:15px;top:57px;width:9px;height:9px;background:#fff"></div>
  <div class="a" style="left:38.1px;top:20.5px;width:70.3px;height:45.5px;background:#02559e"></div>
  <div class="a" style="left:74px;top:27.5px;width:34px;height:1px;background:#fff"></div>
  <div class="a" style="left:44px;top:27.5px;width:4px;height:1px;background:#fff"></div>
  <div class="a" style="left:83px;top:32px;font-size:11.5px;line-height:16px;font-weight:700;color:#fff;white-space:nowrap">Making<br>Presen<br>Stick</div>
</div>
<!-- thumb 9 -->
<div class="a th" style="left:1088.3px;top:622px;width:110px;height:65.7px;background:#fff;border-radius:2px 0 0 0">
  <div class="a" style="left:0;top:0;width:110px;height:6px;background:#2b84d6"></div>
  <div class="a" style="left:38px;top:0;width:14px;height:6px;background:#1f6fc0"></div>
  <div class="a" style="left:0;top:6px;width:38px;height:60px;background:#3d4246"></div>
  <div class="a" style="left:3px;top:8px;width:16px;height:5px;border-radius:2px;background:#2b84d6"></div>
  <div class="a" style="left:20px;top:8px;width:16px;height:5px;background:#4a4f54"></div>
  <div class="a" style="left:1px;top:18px;width:36px;height:1px;background:#555"></div>
  <div class="a" style="left:1px;top:31px;width:36px;height:1px;background:#555"></div>
  <div class="a" style="left:1px;top:44px;width:36px;height:1px;background:#555"></div>
  <div class="a" style="left:18.5px;top:19px;width:1px;height:40px;background:#555"></div>
  <div class="a" style="left:38px;top:6px;width:12px;height:60px;background:#f5f5f5"></div>
  <div class="a" style="left:50px;top:6px;width:60px;height:29px;background:linear-gradient(170deg,#cfcfcf,#8d8d8d 50%,#b7b7b7)"></div>
  <svg class="a" style="left:52px;top:10px" width="56" height="24"><path d="M2 6 Q10 2 18 6 T34 5 T52 3 M1 12 Q9 9 17 13 T33 11 T50 10 M3 18 Q12 15 20 19 T36 17" fill="none" stroke="#333" stroke-width="0.9" opacity="0.7"/></svg>
  <div class="a" style="left:54px;top:39px;width:20px;height:1.5px;background:#ccc"></div>
  <div class="a" style="left:54px;top:46px;width:8px;height:1.5px;background:#ddd"></div>
  <svg class="a" style="left:2px;top:22px" width="36" height="30"><path d="M10 2.5 A6.2 6.2 0 1 0 10 14.9 L20 8.7 Z M10 15.6 A6.2 6.2 0 1 0 10 28 L20 21.8 Z" fill="#e0393e"/><g stroke="#8a8f94" stroke-width="3"><line x1="25" y1="8" x2="32" y2="8"/><line x1="25" y1="21" x2="32" y2="21"/></g><text x="10" y="12" font-size="7" fill="#fff" font-family="Liberation Sans" text-anchor="middle">1</text><text x="10" y="25" font-size="7" fill="#fff" font-family="Liberation Sans" text-anchor="middle">2</text></svg>
  <div class="a" style="left:91.4px;top:44px;width:20px;height:17px;border-radius:3px;background:#0bb49a"></div>
  <svg class="a" style="left:86px;top:55px" width="8" height="8"><path d="M6 1 L1 6 L7 4 Z" fill="#0bb49a"/></svg>
  <div class="a" style="left:93px;top:46.5px;font-size:7px;line-height:7.5px;color:#fff;white-space:nowrap">Add yo<br>copy f</div>
  <svg class="a" style="left:74px;top:52px" width="12" height="12"><path d="M6 0.5 L7.6 4.2 L11.5 4.5 L8.5 7 L9.5 11 L6 8.8 L2.5 11 L3.5 7 L0.5 4.5 L4.4 4.2 Z" fill="#f6c431"/></svg>
</div>
<!-- window corner marks -->
<svg class="a" style="left:0;top:0" width="1280" height="720"><path d="M82 16 H85.5 L82 19.5 Z M1198 16 H1194.5 L1198 19.5 Z M82 704 V701 L84.5 704 Z M1198 704 V701 L1195.5 704 Z" fill="#111"/></svg>


<!-- TOOLBAR -->
<div class="a" style="left:88.3px;top:19.5px;width:11px;height:11px;border-radius:50%;background:#fc615d;border:0.5px solid #e0443e"></div>
<div class="a" style="left:104.3px;top:19.5px;width:11px;height:11px;border-radius:50%;background:#fdbc40;border:0.5px solid #dea236"></div>
<div class="a" style="left:120.5px;top:19.5px;width:11px;height:11px;border-radius:50%;background:#34c84a;border:0.5px solid #27aa35"></div>
<svg class="a" style="left:96px;top:40px" width="16" height="16"><g stroke="#4a5461" stroke-width="1.8"><line x1="2" y1="4.5" x2="14.5" y2="4.5"/><line x1="2" y1="8.7" x2="11" y2="8.7"/><line x1="2" y1="13" x2="14.5" y2="13"/></g></svg>
<svg class="a" style="left:134px;top:40px" width="17" height="17"><circle cx="8.5" cy="8.5" r="6.4" fill="#f6d6d6" stroke="#d6504a" stroke-width="0.9"/><circle cx="8.5" cy="8.5" r="4.9" fill="#e2332a"/></svg>
<div class="a lbl" style="left:89px;top:63px">Library</div>
<div class="a lbl" style="left:125.5px;top:63px">Capture</div>
<svg class="a" style="left:577px;top:21px" width="10" height="11"><rect x="0" y="0" width="10" height="11" fill="#f4f7fb"/><path d="M7.8 2.6 H3.6 Q2 2.6 2 4.4 Q2 6 3.6 6 H6.6 Q8 6 8 7.4 Q8 9 6.4 9 H2" fill="none" stroke="#2e4150" stroke-width="1.7"/></svg>
<div class="a" style="left:591px;top:19px;font-size:11.5px;color:#454c55;white-space:nowrap">2016-03-21_13-55-50</div>
<!-- tools -->
<svg class="a" style="left:445px;top:38px" width="22" height="20"><path d="M3.5 3 L18.5 17.5" stroke="#3e4852" stroke-width="2.6"/><path d="M2.5 2.5 L12.5 3.8 L3.8 12.5 Z" fill="#3e4852"/></svg>
<div class="a" style="left:480px;top:33.5px;font-size:28px;line-height:28px;color:#4b5560">a</div>
<svg class="a" style="left:512px;top:38px" width="24" height="20"><ellipse cx="11.5" cy="8.7" rx="9.8" ry="6.9" fill="#4a9de0"/><path d="M6 13 L5 18.5 L11 14.5 Z" fill="#4a9de0"/></svg>
<div class="a" style="left:550.5px;top:40.3px;width:17.5px;height:17.3px;border:1.8px solid #4b5560"></div>
<svg class="a" style="left:582px;top:37px" width="22" height="22"><path d="M4 11 L11.5 3.5 L19.5 11.5 L12 19 Z" fill="#3e4b57"/><line x1="8.2" y1="1.5" x2="8.2" y2="9.2" stroke="#3e4b57" stroke-width="1.4"/><circle cx="8.2" cy="9.5" r="1" fill="#3e4b57"/><path d="M4 15 Q2 18 2.2 18.8 A1.9 1.9 0 0 0 5.8 18.8 Q6 18 4 15 Z" fill="#3e4b57"/></svg>
<svg class="a" style="left:617px;top:39px" width="20" height="20"><path d="M1 1 H19 V19 H1 Z" fill="#3d4a57"/><g fill="#e4e6ea"><circle cx="5" cy="1" r="1.3"/><circle cx="10" cy="1" r="1.3"/><circle cx="15" cy="1" r="1.3"/><circle cx="5" cy="19" r="1.3"/><circle cx="10" cy="19" r="1.3"/><circle cx="15" cy="19" r="1.3"/><circle cx="1" cy="5" r="1.3"/><circle cx="1" cy="10" r="1.3"/><circle cx="1" cy="15" r="1.3"/><circle cx="19" cy="5" r="1.3"/><circle cx="19" cy="10" r="1.3"/><circle cx="19" cy="15" r="1.3"/><path d="M10 3.8 L11.7 8 L16.2 8.2 L12.7 11 L13.9 15.4 L10 12.9 L6.1 15.4 L7.3 11 L3.8 8.2 L8.3 8 Z"/></g></svg>
<svg class="a" style="left:662px;top:39px" width="21" height="21"><circle cx="10.5" cy="10.5" r="9.3" fill="none" stroke="#49545f" stroke-width="1.2"/><circle cx="10.5" cy="10.5" r="7.6" fill="#3e4b57"/><path d="M6.5 9 Q7.5 6 10.5 5.2" stroke="#9aa4ae" stroke-width="0.9" fill="none"/></svg>
<div class="a" style="left:697.5px;top:41px;font-size:10px;color:#4b5560">More</div>
<svg class="a" style="left:704px;top:56px" width="9" height="6"><path d="M0.5 0.5 L8.5 0.5 L4.5 4.5 Z" fill="#3e4852"/></svg>
<div class="a lbl" style="left:443px;top:63px">Arrow</div>
<div class="a lbl" style="left:479px;top:63px">Text</div>
<div class="a lbl" style="left:508px;top:63px">Callout</div>
<div class="a lbl" style="left:545px;top:63px">Shape</div>
<div class="a lbl" style="left:586px;top:63px">Fill</div>
<div class="a lbl" style="left:613px;top:63px">Stamp</div>
<div class="a lbl" style="left:659px;top:63px">Magnify</div>
<!-- top right -->
<svg class="a" style="left:1030px;top:26px" width="132" height="6"><path d="M2 3.5 H130" stroke="#6b7079" stroke-width="1.2" stroke-dasharray="3 2 5 2 2 3 4 2"/></svg>
<svg class="a" style="left:1177px;top:17px" width="15" height="15"><circle cx="7.5" cy="7" r="6.3" fill="#3d4854"/><path d="M2.5 11 L1.5 14 L5 12 Z" fill="#3d4854"/><rect x="6.6" y="6" width="2" height="5" fill="#fff"/><circle cx="7.6" cy="3.8" r="1.1" fill="#fff"/></svg>
<svg class="a" style="left:1055px;top:41px" width="16" height="16"><path d="M4 11.5 H1.5 V1.5 H10.5 V4" fill="none" stroke="#6b737d" stroke-width="1.1"/><rect x="4.5" y="4.5" width="10" height="10" rx="1.5" fill="none" stroke="#6b737d" stroke-width="1.1"/></svg>
<div class="a" style="left:1073px;top:43px;font-size:11.4px;color:#5d6570;white-space:nowrap">Copy All</div>
<div class="a" style="left:1132px;top:38px;width:57px;height:21px;background:#4a98d8;border-radius:2px"></div>
<svg class="a" style="left:1138px;top:41px" width="13" height="15"><path d="M3.5 6 H1.5 V13.5 H11.5 V6 H9.5" fill="none" stroke="#fff" stroke-width="1.2"/><path d="M6.5 10 V1.5 M3.8 4 L6.5 1.3 L9.2 4" fill="none" stroke="#fff" stroke-width="1.2"/></svg>
<div class="a" style="left:1154px;top:43px;font-size:11.6px;color:#fff;white-space:nowrap">Share</div>


</body></html>
